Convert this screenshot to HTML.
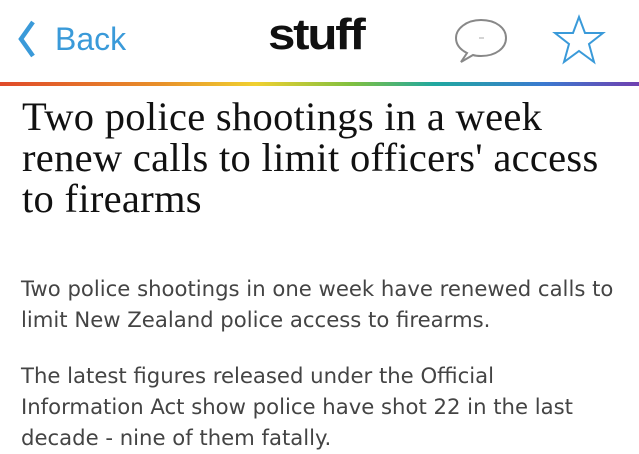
<!DOCTYPE html>
<html><head><style>
body{margin:0;width:639px;height:454px;overflow:hidden;background:#fff;position:relative;font-family:"Liberation Sans",sans-serif}
.back{position:absolute;left:55px;top:21px;color:#3a9ad9;font-size:32px}
.chev{position:absolute;left:16px;top:19px}
.logo{position:absolute;left:268px;top:10px;font-weight:bold;font-size:44px;letter-spacing:-2px;color:#111;transform:scaleX(1.12);transform-origin:left}
.bar{position:absolute;left:0;top:82px;width:639px;height:4px;background:linear-gradient(90deg,#e04a2a,#e8902a 25%,#f0d030 40%,#80c040 55%,#20a8a0 68%,#3a7ad0 85%,#7040b0)}
h1{position:absolute;left:22px;top:96px;margin:0;font-family:"Liberation Serif",serif;font-weight:normal;font-size:40.5px;letter-spacing:0.3px;line-height:41px;color:#111;white-space:nowrap}
p{position:absolute;left:21px;margin:0;font-family:"DejaVu Sans",sans-serif;font-size:21.2px;line-height:31px;color:#444;white-space:nowrap}
</style></head><body>
<svg class="chev" width="22" height="40"><path d="M17 3 L5 20 L17 37" fill="none" stroke="#3a9ad9" stroke-width="4.5"/></svg>
<div class="back">Back</div>
<div class="logo">stuff</div>
<svg style="position:absolute;left:452px;top:16px" width="60" height="50"><path d="M29 4 C14 4 4 13 4 22 C4 29 9 34 15 37 L9 46 L21 39 C24 40 26 40 29 40 C44 40 54 32 54 22 C54 12 44 4 29 4 Z" fill="none" stroke="#888" stroke-width="2"/><line x1="27" y1="22" x2="32" y2="22" stroke="#aaa" stroke-width="1"/></svg>
<svg style="position:absolute;left:550px;top:14px" width="58" height="52"><path d="M29 3 L35 19 L53 19 L39 30 L44 48 L29 37 L14 48 L19 30 L5 19 L23 19 Z" fill="none" stroke="#3a9ad9" stroke-width="2"/></svg>
<div class="bar"></div>
<h1>Two police shootings in a week<br>renew calls to limit officers' access<br>to firearms</h1>
<p style="top:273px">Two police shootings in one week have renewed calls to<br>limit New Zealand police access to firearms.</p>
<p style="top:360px">The latest figures released under the Official<br>Information Act show police have shot 22 in the last<br>decade - nine of them fatally.</p>
</body></html>
